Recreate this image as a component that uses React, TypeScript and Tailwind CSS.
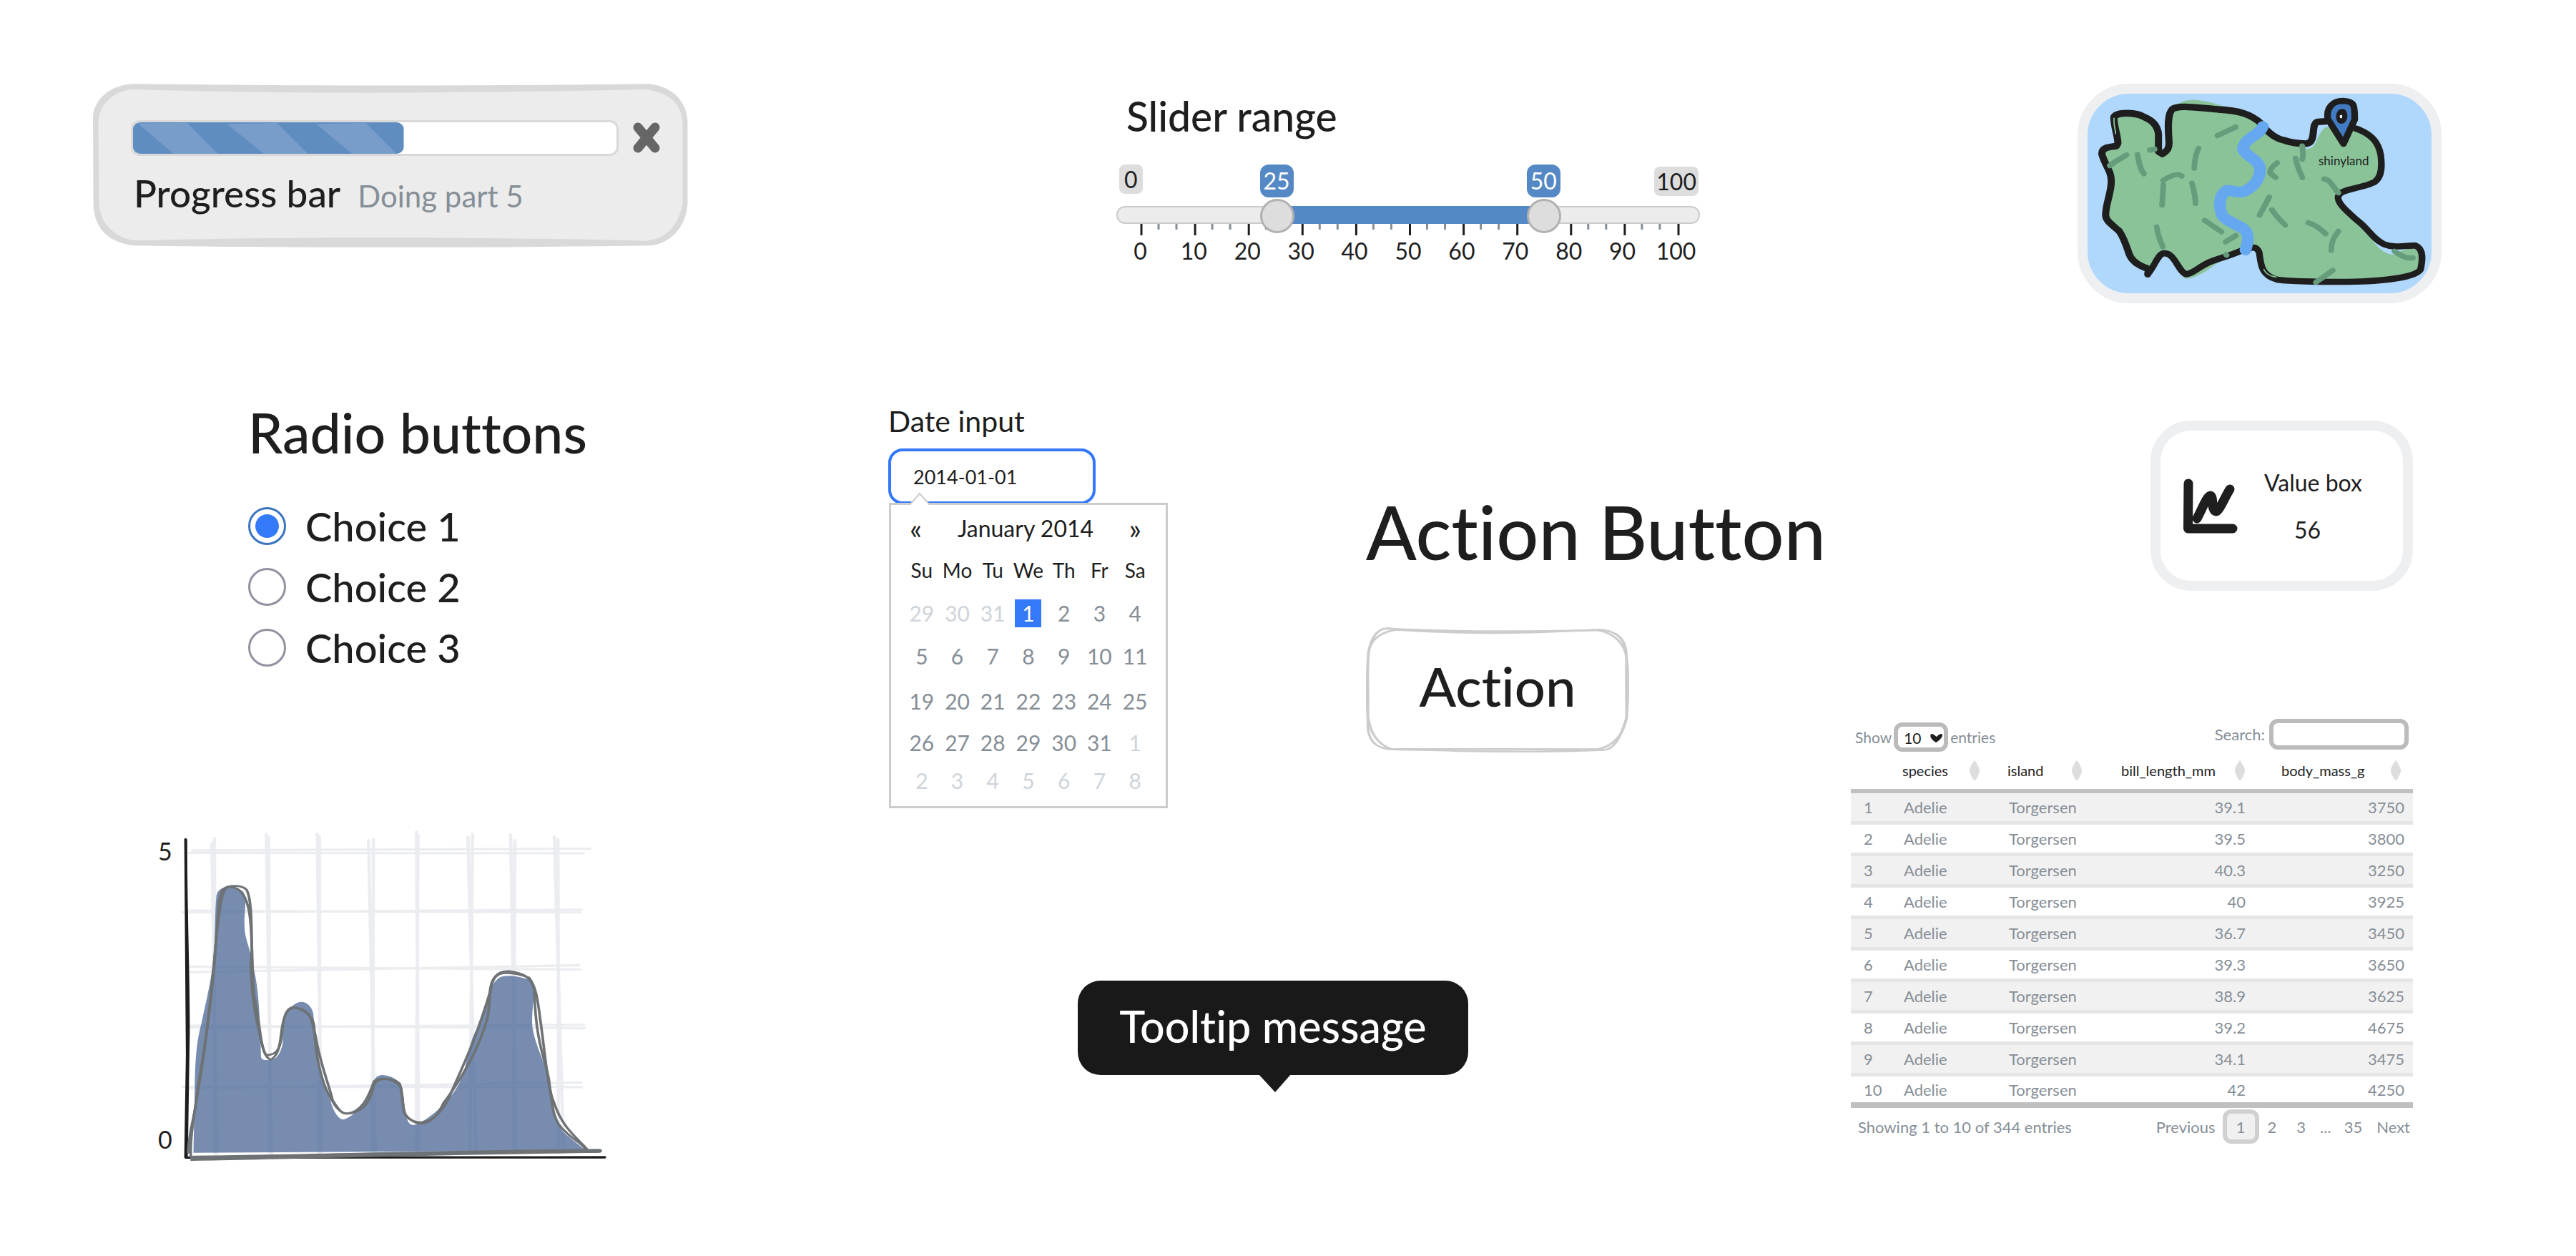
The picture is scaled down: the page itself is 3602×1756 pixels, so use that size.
import { useState } from 'react';
import type { ReactNode } from 'react';

type Penguin = {
  id: number;
  bill: string;
  mass: number;
};

const penguins: Penguin[] = [
  { id: 1, bill: '39.1', mass: 3750 },
  { id: 2, bill: '39.5', mass: 3800 },
  { id: 3, bill: '40.3', mass: 3250 },
  { id: 4, bill: '40', mass: 3925 },
  { id: 5, bill: '36.7', mass: 3450 },
  { id: 6, bill: '39.3', mass: 3650 },
  { id: 7, bill: '38.9', mass: 3625 },
  { id: 8, bill: '39.2', mass: 4675 },
  { id: 9, bill: '34.1', mass: 3475 },
  { id: 10, bill: '42', mass: 4250 },
];

const weekdays = ['Su', 'Mo', 'Tu', 'We', 'Th', 'Fr', 'Sa'];

// `muted` lists the column indexes that belong to the neighbouring month
const weeks = [
  { height: 'h-[60px]', days: [29, 30, 31, 1, 2, 3, 4], muted: [0, 1, 2], selected: 3 },
  { height: 'h-[60px]', days: [5, 6, 7, 8, 9, 10, 11], muted: [], selected: -1 },
  { height: 'h-[66px]', days: [19, 20, 21, 22, 23, 24, 25], muted: [], selected: -1 },
  { height: 'h-[50px]', days: [26, 27, 28, 29, 30, 31, 1], muted: [6], selected: -1 },
  { height: 'h-[56px]', days: [2, 3, 4, 5, 6, 7, 8], muted: [0, 1, 2, 3, 4, 5, 6], selected: -1 },
] as { height: string; days: number[]; muted: number[]; selected: number }[];

const ticks = [0, 10, 20, 30, 40, 50, 60, 70, 80, 90, 100];

const ProgressCard = () => (
  <section className="relative h-[229px] pt-[51px] pl-[53px] pr-[37px]">
    <svg
      className="absolute inset-0 h-full w-full"
      viewBox="51 77 1452 689"
      preserveAspectRatio="none"
      aria-hidden="true"
    >
      <path
        fill="#d9d9d9"
        d="M152 78 C500 86 1000 88 1404 78 C1465 86 1499 150 1502 232 L1502 580 C1498 690 1455 750 1412 758 C1000 768 500 768 152 758 C90 746 56 690 52 590 L51 210 C58 130 100 80 152 78 Z"
      />
      <path
        fill="#ececec"
        d="M152 101 C500 120 900 120 1400 101 C1455 112 1487 160 1490 240 L1490 580 C1480 680 1445 732 1400 738 C1000 720 500 720 152 737 C100 722 68 660 66 580 L64 240 C68 150 110 102 152 101 Z"
      />
    </svg>
    <div className="relative flex items-center gap-[18px]">
      <div
        role="progressbar"
        aria-label="Progress bar"
        aria-valuenow={55}
        className="h-[50px] flex-1 rounded-xl border-3 border-[#d9d9d9] bg-white"
      >
        <svg className="h-full w-[56%]" viewBox="150 240 658 137" preserveAspectRatio="none" aria-hidden="true">
          <rect x="150" y="240" width="658" height="137" rx="18" ry="28" fill="#5f8dc0" />
          <path
            fill="#789dca"
            d="M162 245 L282 243 L356 377 L248 377 Z M378 247 L500 243 L575 377 L468 377 Z M595 247 L716 243 L790 377 L683 377 Z"
          />
        </svg>
      </div>
      <button type="button" aria-label="Close" className="h-[46px] w-[42px]">
        <svg className="h-full w-full" viewBox="0 0 42 46" fill="none" stroke="#666" strokeWidth="13" strokeLinecap="round">
          <path d="M9 8 L33 37 M33 8 L9 37" />
        </svg>
      </button>
    </div>
    <div className="relative mt-[22px] flex items-baseline gap-6 pl-1">
      <span className="text-[53px] font-medium leading-[60px]">Progress bar</span>
      <span className="text-[42px] leading-[60px] text-[#868e96]">Doing part 5</span>
    </div>
  </section>
);

const RadioGroup = () => {
  const [choice, setChoice] = useState('Choice 1');

  return (
    <fieldset className="ml-[217px] mt-[218px]">
      <legend className="text-[77px] font-medium leading-[80px]">Radio buttons</legend>
      <div className="mt-[65px] flex flex-col gap-8">
        {['Choice 1', 'Choice 2', 'Choice 3'].map((label) => (
          <label key={label} className="flex items-center gap-[27px] text-[56px] font-medium leading-[52px]">
            <input
              type="radio"
              name="choice"
              checked={choice === label}
              onChange={() => setChoice(label)}
              className="size-[53px] appearance-none rounded-full border-3 border-[#9391a0] bg-white checked:border-[#3a74bf] checked:bg-[#3479f8] checked:bg-clip-content checked:p-[7px]"
            />
            {label}
          </label>
        ))}
      </div>
    </fieldset>
  );
};

const DensityPlot = () => (
  <section className="ml-[91px] mt-[230px] flex">
    <div className="flex w-8 flex-col justify-between pb-3 pt-2 text-[34px] leading-10">
      <span>5</span>
      <span>0</span>
    </div>
    <svg className="h-[463px] w-[597px]" viewBox="160 60 1300 1390" preserveAspectRatio="none" fill="none" strokeLinecap="round">
      <g stroke="#e9ebef" strokeOpacity="0.9" strokeWidth="10">
        <path d="M254 110 L270 1415 M262 88 L264 1415 M420 72 L436 1415 M427 84 L432 1415 M575 72 L588 1415 M582 84 L582 1415 M731 98 L752 1415 M746 92 L744 1415 M877 62 L884 1415 M882 76 L876 1415 M1034 84 L1058 1400 M1048 72 L1040 1400 M1164 74 L1180 1400 M1177 98 L1172 1395 M1297 84 L1325 1400 M1308 94 L1310 1412" />
        <path d="M185 151 L1385 153 M195 141 L1405 134 M166 401 L1378 390 M180 394 L1376 401 M185 629 L1375 641 M185 652 L1371 623 M190 876 L1388 887 M190 884 L1386 873 M166 1133 L1380 1134 M180 1140 L1378 1115" />
      </g>
      <path
        fill="#4c6896"
        fillOpacity="0.76"
        d="M198 1410 L202 1150 C203 1000 210 930 222 870 C232 800 248 720 258 610 C266 500 262 420 268 330 C276 280 330 290 350 315 C364 350 350 400 354 470 C356 520 372 550 378 620 C395 700 400 800 404 1010 C408 1022 420 1022 434 1020 C450 1020 465 990 470 950 C470 870 480 800 515 780 C540 765 564 800 564 840 C572 980 590 1130 615 1190 C625 1240 640 1270 654 1270 C670 1268 710 1225 720 1195 C742 1150 738 1090 770 1084 C800 1084 835 1110 834 1150 C842 1180 838 1290 866 1294 C890 1290 940 1240 970 1190 C1040 1090 1020 1000 1060 890 C1090 780 1100 700 1130 675 C1160 655 1210 680 1225 685 C1245 740 1225 800 1230 880 C1238 960 1270 1030 1280 1110 C1284 1220 1300 1290 1330 1330 L1392 1400 Z"
      />
      <g stroke="#1e1e1e">
        <path strokeWidth="8" d="M174 94 C176 400 180 700 179 1000 L174 1430" />
        <path strokeWidth="6" d="M176 96 C176 400 184 640 184 900 L178 1430" />
        <path strokeWidth="10" d="M176 1430 L1450 1429" />
      </g>
      <g stroke="#6e7275">
        <path
          strokeWidth="8"
          d="M182 1410 C185 1300 205 1260 210 1150 C238 930 258 700 266 540 C274 390 274 330 288 304 C302 286 345 284 360 306 C378 350 374 500 376 560 C368 660 380 800 398 900 C408 960 412 1010 434 1020 C470 990 460 900 474 850 C482 800 500 790 520 806 C548 820 566 850 566 890 C570 1010 590 1130 622 1195 C640 1240 660 1255 690 1240 C730 1220 740 1170 746 1130 C758 1090 800 1092 828 1130 C840 1180 830 1240 850 1262 C890 1310 930 1290 960 1200 C1010 1110 1070 970 1094 840 C1104 760 1096 680 1130 660 C1160 648 1200 665 1220 675 C1240 710 1246 760 1254 850 C1268 980 1276 1140 1296 1200 C1320 1300 1360 1340 1395 1392"
        />
        <path
          strokeWidth="8"
          d="M190 1425 C186 1320 216 1130 226 1030 C250 800 258 650 268 500 C278 380 284 300 304 296 C340 290 362 330 370 420 C378 500 376 640 382 750 C400 840 400 970 420 1000 C470 1000 464 930 472 860 C480 800 500 798 520 804 C560 820 558 860 570 920 C584 1040 608 1110 622 1190 C640 1230 650 1246 664 1246 C710 1240 730 1180 748 1110 C768 1090 810 1098 826 1120 C836 1160 834 1230 844 1250 C870 1300 930 1300 974 1185 C1010 1070 1064 920 1100 740 C1104 680 1120 645 1160 648 C1200 656 1228 670 1236 730 C1240 950 1270 1020 1280 1100 C1290 1200 1290 1280 1330 1320 C1350 1350 1380 1370 1390 1392"
        />
        <path strokeWidth="16" d="M196 1430 C600 1425 1000 1404 1434 1402" />
        <path strokeWidth="8" d="M192 1440 C600 1430 1000 1412 1430 1406" />
      </g>
    </svg>
  </section>
);

const RangeInput = ({ label, value }: { label: string; value: number }) => (
  <input
    type="range"
    aria-label={label}
    min={0}
    max={100}
    defaultValue={value}
    className="pointer-events-none absolute left-3 top-[-12px] h-12 w-[calc(100%-18px)] appearance-none bg-transparent [&::-webkit-slider-thumb]:pointer-events-auto [&::-webkit-slider-thumb]:size-12 [&::-webkit-slider-thumb]:appearance-none [&::-webkit-slider-thumb]:rounded-full [&::-webkit-slider-thumb]:border-3 [&::-webkit-slider-thumb]:border-[#b1b1b1] [&::-webkit-slider-thumb]:bg-[#ddd]"
  />
);

const SliderRange = () => (
  <section className="ml-[319px] mr-[211px]">
    <h2 className="pl-[14px] text-[57px] font-medium leading-[64px]">Slider range</h2>
    <div className="mt-9 flex h-[46px] items-start pl-1 pr-0.5 text-[32px] leading-[41px]">
      <span className="rounded-lg bg-[#ddd] px-[7px]">0</span>
      <span className="ml-[164px] rounded-xl bg-[#5589c6] px-[5px] leading-[46px] text-white">25</span>
      <span className="ml-[326px] rounded-xl bg-[#5589c6] px-[5px] leading-[46px] text-white">50</span>
      <span className="ml-auto mt-[3px] rounded-lg bg-[#ddd] px-[3px]">100</span>
    </div>
    <div className="relative mt-3 flex h-[25px] rounded-xl border-2 border-[#ccc] bg-[#ececec]">
      <div className="absolute -inset-y-0.5 left-[27%] right-[27%] bg-[#5589c6]" />
      <RangeInput label="Lower value" value={25} />
      <RangeInput label="Upper value" value={75} />
    </div>
    <svg className="h-4 w-full" viewBox="0 0 816 16" aria-hidden="true">
      {ticks.map((tick) => (
        <g key={tick} strokeWidth="3">
          <path stroke="#1e1e1e" d={`M${35 + tick * 7.51} 0 v16`} />
          {tick < 100 && <path stroke="#868e96" d={`M${59 + tick * 7.51} 0 v8 M${84 + tick * 7.51} 0 v8`} />}
        </g>
      ))}
    </svg>
    <div className="-mx-1 grid grid-cols-11 pt-1 text-center text-[32px] leading-9">
      {ticks.map((tick) => (
        <span key={tick}>{tick}</span>
      ))}
    </div>
  </section>
);

const DateInput = () => (
  <section className="w-[391px]">
    <label htmlFor="date" className="block text-[41px] leading-[44px]">
      Date input
    </label>
    <input
      id="date"
      type="text"
      defaultValue="2014-01-01"
      className="mt-4 block h-[78px] w-[290px] rounded-[20px] border-4 border-[#3479fb] pl-[31px] text-[27px] outline-none"
    />
    <div className="relative -mt-0.5 ml-px border-[3px] border-[#ccc] bg-white px-[18px] pb-2 pt-[13px]">
      <svg className="absolute left-[24px] top-[-18px] h-[18px] w-8" viewBox="0 0 32 18" aria-hidden="true">
        <path d="M2 18 L16 2 L30 18" fill="#fff" stroke="#ccc" strokeWidth="2" />
      </svg>
      <div className="flex items-center justify-between px-2 text-[32px] leading-10">
        <button type="button" aria-label="Previous month" className="text-[40px] leading-9">
          «
        </button>
        <span>January 2014</span>
        <button type="button" aria-label="Next month" className="pr-2 text-[40px] leading-9">
          »
        </button>
      </div>
      <table className="mt-2 w-full table-fixed text-center text-[30px]">
        <thead>
          <tr className="h-[60px] text-[28px]">
            {weekdays.map((day) => (
              <th key={day} className="p-0 text-center font-normal">
                {day}
              </th>
            ))}
          </tr>
        </thead>
        <tbody>
          {weeks.map((week, row) => (
            <tr key={row} className={week.height}>
              {week.days.map((day, i) => (
                <td key={i} className={week.muted.includes(i) ? 'p-0 text-[#ced4da]' : 'p-0 text-[#868e96]'}>
                  {i === week.selected ? (
                    <span className="mx-auto block w-[37px] bg-[#3479f8] leading-[39px] text-white">{day}</span>
                  ) : (
                    day
                  )}
                </td>
              ))}
            </tr>
          ))}
        </tbody>
      </table>
    </div>
  </section>
);

const ActionButton = () => (
  <section className="pt-[116px]">
    <h2 className="whitespace-nowrap text-[104px] font-medium leading-[120px]">Action Button</h2>
    <button type="button" className="relative mt-[74px] h-[176px] w-[368px] pb-3 text-[76px] font-medium">
      <svg
        className="absolute inset-0 h-full w-full"
        viewBox="64 588 804 530"
        preserveAspectRatio="none"
        fill="none"
        stroke="#ccc"
        strokeWidth="8"
        aria-hidden="true"
      >
        <path d="M160 598 C380 620 560 612 780 598 C840 604 862 650 860 720 C868 800 866 880 860 970 C840 1060 820 1104 790 1104 C560 1118 350 1108 145 1102 C90 1100 66 1060 70 980 C66 880 66 800 72 690 C80 630 120 604 160 598 Z" />
        <path d="M128 593 C300 608 560 606 770 600 C820 610 862 660 860 730 C858 800 860 880 860 970 C850 1040 820 1090 770 1102 C560 1100 350 1102 140 1100 C100 1080 76 1030 70 960 C72 880 68 800 70 720 C74 640 96 594 128 593 C150 593 158 598 170 600" />
      </svg>
      <span className="relative">Action</span>
    </button>
  </section>
);

const Tooltip = () => (
  <div
    role="tooltip"
    className="relative ml-[265px] mt-[241px] flex h-[132px] w-[546px] items-center justify-center rounded-[32px] bg-[#191919] pb-1 text-[61px] font-medium text-white"
  >
    Tooltip message
    <svg className="absolute left-[253px] top-[131px] h-[25px] w-[45px]" viewBox="0 0 45 25" aria-hidden="true">
      <path d="M0 0 H45 L23 25 Z" fill="#191919" />
    </svg>
  </div>
);

const MapCard = () => (
  <section className="relative ml-auto h-[307px] w-[509px] overflow-hidden rounded-[72px] border-14 border-[#eeeff1] bg-[#b0d7fc]">
    <svg
      className="h-full w-full"
      viewBox="109 92 1348 838"
      preserveAspectRatio="none"
      fill="none"
      strokeLinecap="round"
      strokeLinejoin="round"
      aria-hidden="true"
    >
      <path
        fill="#8ac398"
        d="M350 838 C300 825 275 795 262 750 C250 710 240 680 215 660 C185 635 176 620 180 590 C190 540 200 500 200 450 C195 410 185 400 168 345 L185 325 L228 310 L215 195 C260 165 350 175 392 240 L394 330 L412 330 C440 300 425 220 430 175 C450 145 470 118 520 118 C580 118 640 142 700 170 C760 190 800 250 850 275 C900 300 940 300 960 322 C1010 335 1005 260 1042 232 L1165 245 C1240 270 1262 320 1264 380 C1270 440 1270 480 1170 490 L1095 520 C1110 570 1170 630 1210 680 C1240 740 1280 770 1310 768 C1350 740 1390 735 1415 745 C1432 790 1440 830 1380 855 C1240 880 1000 882 850 868 C790 850 790 800 775 740 L730 745 C690 770 640 790 610 808 C560 850 520 870 490 868 C470 850 440 780 405 762 Z"
      />
      <g stroke="#1e1e1e">
        <path
          strokeWidth="28"
          d="M345 850 L348 828 C310 815 282 795 272 765 C258 720 248 690 232 668 C200 638 182 625 180 605 C178 560 202 510 202 460 C202 415 180 400 165 345 C165 318 190 316 222 312 L228 300 C228 270 212 230 212 190 C225 168 300 168 335 192 C370 208 384 232 387 262 L387 335 L402 345 C424 330 430 320 428 290 C424 230 422 175 442 156 C470 138 540 152 620 158 C700 162 750 178 790 218 C820 262 850 282 880 288 C920 302 950 302 965 302 C1010 300 980 215 1012 210 L1044 208"
        />
        <path
          strokeWidth="26"
          d="M1160 238 C1225 262 1250 300 1258 350 C1264 400 1262 440 1235 462 C1190 488 1120 490 1098 512 C1070 540 1130 590 1170 628 C1210 660 1225 700 1270 724 C1310 742 1350 728 1395 730 C1430 745 1420 800 1414 830 C1390 868 1240 880 1130 882 C1020 882 900 882 850 872 C790 855 788 810 782 760 C770 725 745 740 710 752 C660 775 620 785 590 798 C550 815 520 850 495 850 C465 840 450 760 410 762 C385 762 375 810 352 840"
        />
        <path strokeWidth="5" stroke="#8ac398" d="M213 195 C210 220 218 240 219 260 M800 830 C810 855 835 860 848 862" />
      </g>
      <path
        stroke="#66a8f0"
        strokeWidth="46"
        d="M796 230 C785 265 720 280 718 325 C735 360 785 370 785 412 C785 440 770 475 735 495 C710 515 690 500 655 498 C620 520 625 570 635 600 C650 625 690 640 715 655 C750 680 735 720 728 748"
      />
      <path
        stroke="#669c7c"
        strokeWidth="22"
        d="M196 394 L220 376 L262 349 M305 348 C310 380 315 410 330 428 M353 329 L372 325 M405 456 C440 432 465 425 478 438 M406 475 L401 560 M518 468 C526 500 532 520 532 552 M544 322 C530 350 528 380 527 405 M618 268 L690 232 M380 652 C385 690 395 710 404 735 M568 624 L634 672 M650 714 L690 688 M652 768 L654 770 M852 382 C830 400 822 412 824 425 L846 444 M950 312 C952 330 956 352 950 368 M924 364 C930 395 940 420 951 444 M1036 450 C1065 455 1070 485 1092 508 M821 526 L783 602 M832 580 C850 610 865 625 884 644 M974 634 C1000 640 1020 660 1042 680 M1092 670 C1070 700 1064 720 1064 750 M1312 754 C1340 775 1360 785 1384 782 M1070 834 L1004 884"
      />
      <path
        fill="#437bc2"
        stroke="#1e1e1e"
        strokeWidth="26"
        d="M1112 302 L1050 198 C1044 150 1070 122 1110 122 C1156 124 1156 140 1156 200 Z"
      />
      <path stroke="#1e1e1e" strokeWidth="20" d="M1100 168 C1090 178 1090 208 1104 208 C1122 206 1120 168 1108 166 Z" />
      <ellipse cx="1102" cy="188" rx="5" ry="7" fill="#fff" />
    </svg>
    <span className="absolute left-[323px] top-[82px] text-[17px] leading-6">shinyland</span>
  </section>
);

const ValueBox = () => (
  <section className="ml-auto mr-10 mt-[164px] flex h-[238px] w-[367px] items-center rounded-[57px] border-14 border-[#eeeff1] pl-8">
    <svg
      className="size-[77px]"
      viewBox="0 0 77 77"
      fill="none"
      stroke="#1e1e1e"
      strokeWidth="13"
      strokeLinecap="round"
      strokeLinejoin="round"
      aria-hidden="true"
    >
      <path d="M7 7 L6.500 70 H69" />
      <path d="M19 56 C26 43 33 24 38 24 C43 26 38 45 46 46 C51 44 58 26 65 15" />
    </svg>
    <dl className="ml-9 flex flex-col gap-[30px] pt-0.5 text-center text-[32px] leading-9">
      <dt>Value box</dt>
      <dd className="pr-4">56</dd>
    </dl>
  </section>
);

const HeaderCell = ({ children, className }: { children: ReactNode; className: string }) => (
  <th className={className}>
    <div className="flex items-center justify-between">
      {children}
      <svg className="h-7 w-4" viewBox="0 0 16 28" aria-hidden="true">
        <path d="M8 0 C10 2 16 12 15 15 C14 20 10 28 8 28 C6 28 1 18 1 14 C1 10 6 2 8 0 Z" fill="#ddd" />
      </svg>
    </div>
  </th>
);

const DataTable = () => (
  <section className="mr-10 mt-[179px] text-[22px] text-[#868e96]">
    <div className="flex items-start justify-between pl-1.5 pr-1.5">
      <label className="flex items-center gap-0.5 pt-[5px] text-[21px]">
        Show
        <span className="relative mx-px">
          <select className="h-[41px] w-[76px] appearance-none rounded-xl border-6 border-[#bbb] bg-white pl-2 text-[#1e1e1e]">
            <option>10</option>
          </select>
          <svg className="pointer-events-none absolute right-[7px] top-4 h-3 w-[19px]" viewBox="0 0 19 12" aria-hidden="true">
            <path d="M3 0 C6 0 8 3 10 4 C12 2 14 0 17 0 C21 3 12 11 9 12 C5 10 -2 3 3 0 Z" fill="#1e1e1e" />
          </svg>
        </span>
        entries
      </label>
      <label className="flex items-center gap-1.5">
        Search:
        <input type="search" className="h-[43px] w-[195px] rounded-xl border-6 border-[#bbb] outline-none" />
      </label>
    </div>
    <table className="w-full table-fixed border-separate border-spacing-0">
      <thead>
        <tr className="h-[58px] text-left text-[20px] text-[#1e1e1e] [&>th]:border-b-6 [&>th]:border-[#c0c0c0] [&>th]:p-0 [&>th]:font-normal">
          <th className="w-[66px]" aria-label="Row" />
          <HeaderCell className="w-[147px] pl-1.5! pr-8!">species</HeaderCell>
          <HeaderCell className="w-[145px] pl-1.5! pr-[34px]!">island</HeaderCell>
          <HeaderCell className="w-[194px] pl-5! pr-0!">bill_length_mm</HeaderCell>
          <HeaderCell className="pl-[50px]! pr-4!">body_mass_g</HeaderCell>
        </tr>
      </thead>
      <tbody>
        {penguins.map(({ id, bill, mass }) => (
          <tr
            key={id}
            className="h-11 odd:bg-[#f1f1f1] [&>td]:border-b-5 [&>td]:border-[#e5e5e5] [&>td]:p-0 last:[&>td]:border-b-8 last:[&>td]:border-[#c0c0c0]"
          >
            <td className="pl-[18px]!">{id}</td>
            <td className="pl-2!">Adelie</td>
            <td className="pl-2!">Torgersen</td>
            <td className="text-right">{bill}</td>
            <td className="pr-3! text-right">{mass}</td>
          </tr>
        ))}
      </tbody>
    </table>
    <div className="mt-0.5 flex h-12 items-center justify-between pl-[10px] pr-1">
      <p>Showing 1 to 10 of 344 entries</p>
      <nav aria-label="Table pages" className="flex items-center">
        <a href="#previous">Previous</a>
        <a
          href="#1"
          className="ml-[10px] flex h-12 w-[51px] items-center justify-center rounded-xl border-6 border-[#d0d0d0] bg-[#f0f0f0]"
        >
          1
        </a>
        <a href="#2" className="ml-3">
          2
        </a>
        <a href="#3" className="ml-7">
          3
        </a>
        <span className="ml-5">...</span>
        <a href="#35" className="ml-[18px]">
          35
        </a>
        <a href="#next" className="ml-5">
          Next
        </a>
      </nav>
    </div>
  </section>
);

export default function App() {
  return (
    <main className="grid min-h-screen grid-cols-[1112fr_1346fr_826fr] bg-white pb-[120px] pl-[130px] pr-[188px] pt-[117px] font-['Lato',sans-serif] text-[#1e1e1e] [font-variant-ligatures:no-common-ligatures]">
      <div className="pr-[280px]">
        <ProgressCard />
        <RadioGroup />
        <DensityPlot />
      </div>
      <div className="pt-[13px]">
        <SliderRange />
        <div className="mt-[198px] flex items-start gap-[277px]">
          <DateInput />
          <ActionButton />
        </div>
        <Tooltip />
      </div>
      <div>
        <MapCard />
        <ValueBox />
        <DataTable />
      </div>
    </main>
  );
}
